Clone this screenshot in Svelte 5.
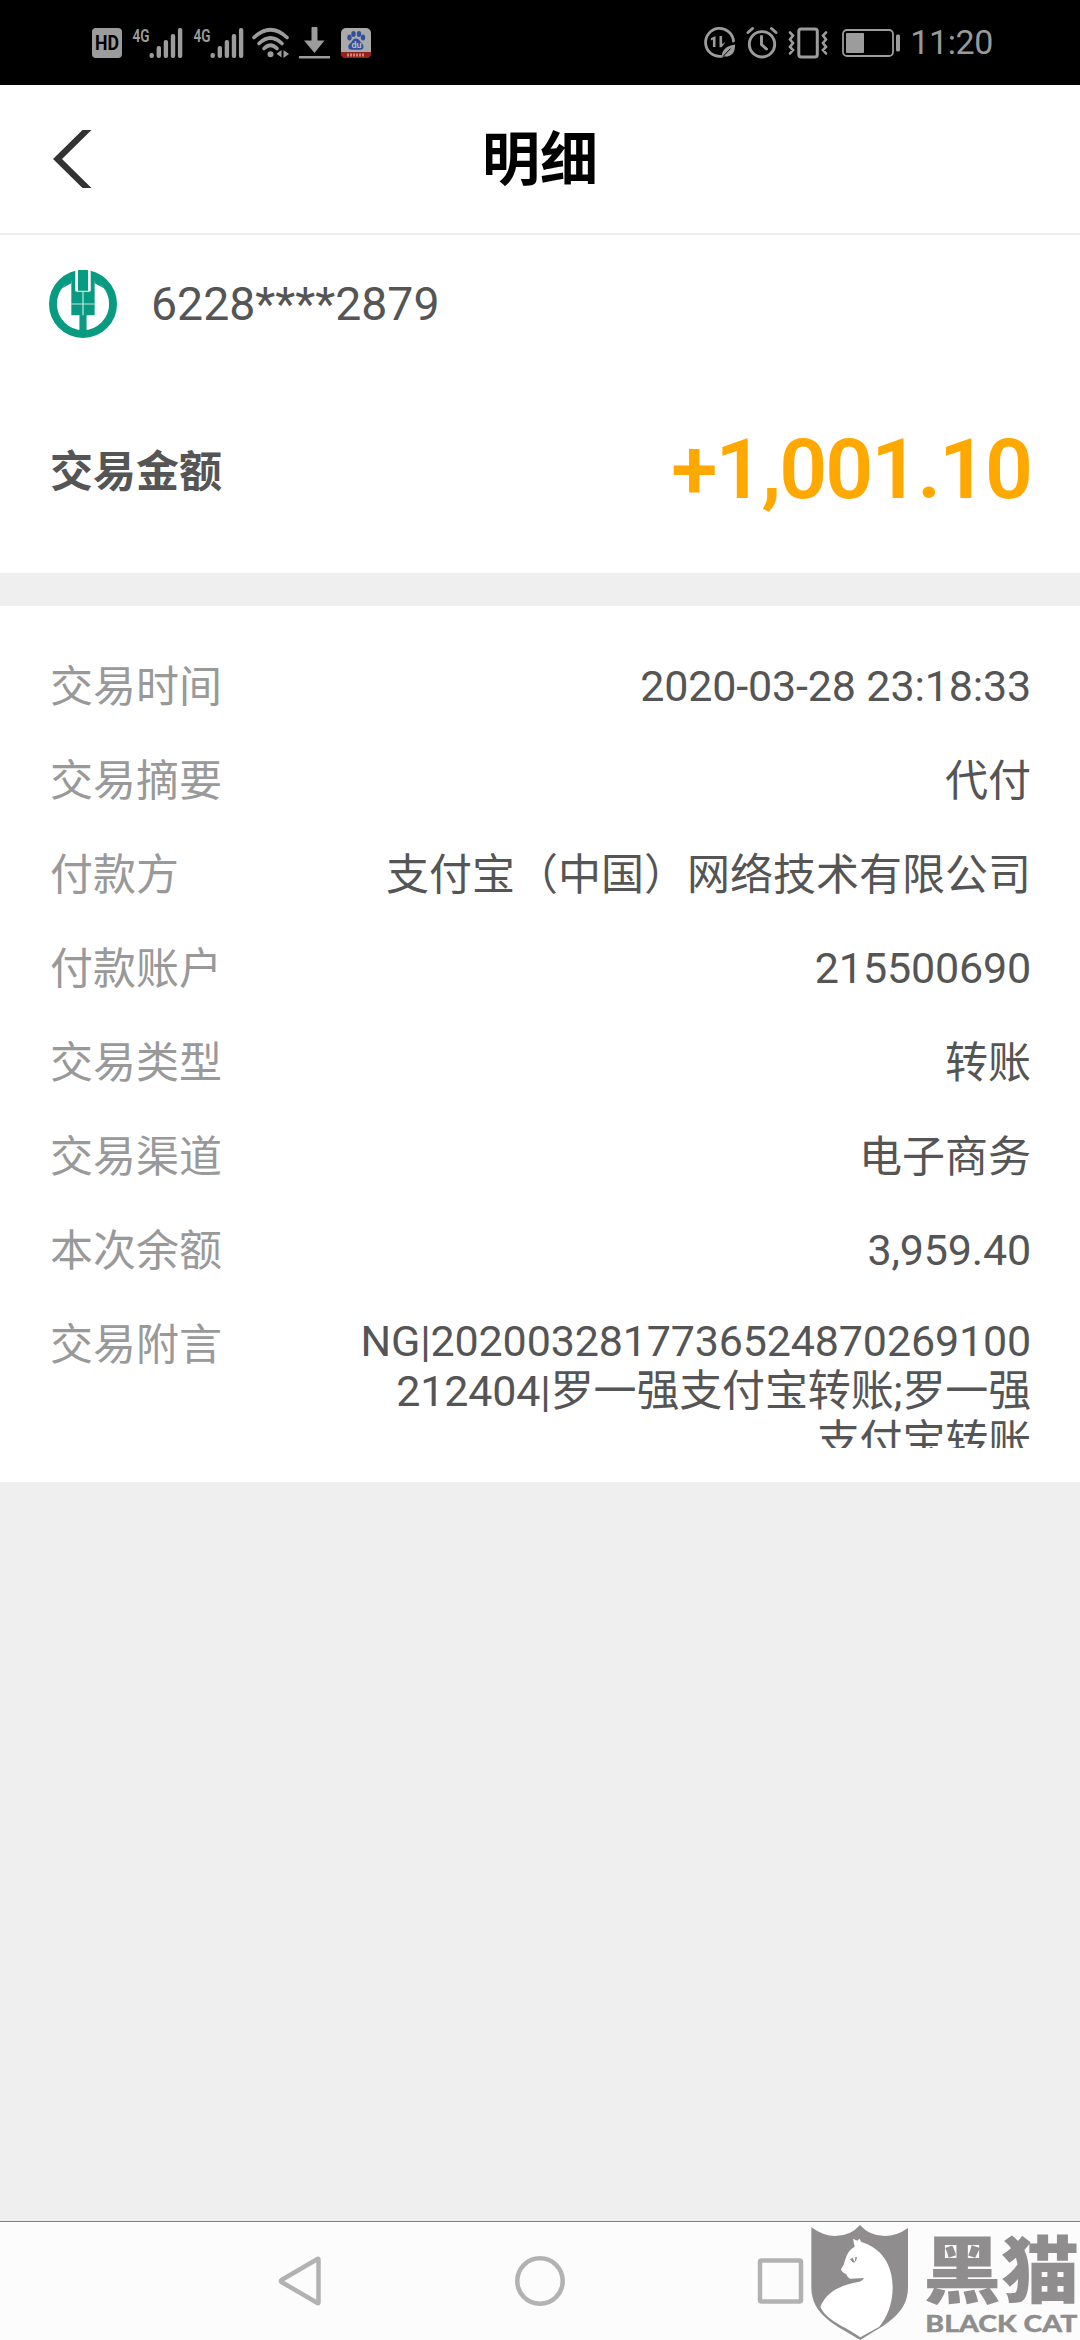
<script>
	const card = '6228****2879';
	const amount = '+1,001.10';

	const rows = [
		{ label: '交易时间', value: '2020-03-28 23:18:33' },
		{ label: '交易摘要', value: '代付' },
		{ label: '付款方', value: '支付宝（中国）网络技术有限公司' },
		{ label: '付款账户', value: '215500690' },
		{ label: '交易类型', value: '转账' },
		{ label: '交易渠道', value: '电子商务' },
		{ label: '本次余额', value: '3,959.40' },
		{
			label: '交易附言',
			value: 'NG|2020032817736524870269100212404|罗一强支付宝转账;罗一强支付宝转账',
			long: true
		}
	];

	// bar heights of the signal icon, left to right
	const bars = [5, 12, 18, 24, 30];

	const isNumber = (s) => /^[\d\s.,:-]+$/.test(s);
</script>

{#snippet signal()}
	<svg class="signal" width="52" height="32" viewBox="0 0 52 32">
		<text x="0.5" y="14.5" font-size="19" font-weight="600" textLength="17" lengthAdjust="spacingAndGlyphs">4G</text>
		{#each bars as h, i}
			<rect x={17.5 + i * 7.1} y={31 - h} width="4.4" height={h} rx="2" />
		{/each}
	</svg>
{/snippet}

<div class="screen">
	<div class="status">
		<div class="side left">
			<svg width="30" height="30" viewBox="0 0 30 30">
				<rect width="30" height="30" rx="4" />
				<text class="dark" x="3" y="22" font-size="20" font-weight="700" textLength="24" lengthAdjust="spacingAndGlyphs">HD</text>
			</svg>
			{@render signal()}
			{@render signal()}
			<svg class="wifi" width="38" height="32" viewBox="0 0 38 32">
				<g class="line" stroke-width="3.6">
					<path d="M2 10.5Q18.5 -5 35 10.5" />
					<path d="M7 16.5Q18.5 5.5 30 16.5" />
					<path d="M12 21.5Q18.5 15 25 21.5" />
				</g>
				<circle cx="18.5" cy="27.3" r="3" />
				<path d="M29.5 23v7.5l-5-3.7zM31.5 23v8l5.5-4z" />
			</svg>
			<svg class="download" width="31" height="32" viewBox="0 0 31 32">
				<path d="M12.5 1q0-1 1-1h4q1 0 1 1v12.5h7L15.5 26 5 13.5h7.5zM0 29h31v2.4H0z" />
			</svg>
			<svg class="baidu" width="30" height="30" viewBox="0 0 30 30">
				<rect width="30" height="30" rx="5" fill="#aaa" />
				<path d="M0 24h30v1q0 5-5 5H5q-5 0-5-5z" fill="#96201c" />
				<g fill="#304f9c">
					<ellipse cx="8.5" cy="9.5" rx="2.2" ry="3" />
					<ellipse cx="12.5" cy="6" rx="2.2" ry="3" />
					<ellipse cx="18" cy="6" rx="2.2" ry="3" />
					<ellipse cx="22" cy="9.5" rx="2.2" ry="3" />
					<path d="M15 10.5c3 0 4 3 6 5s2.5 6-1.5 6.3h-9c-4-.3-4-4.3-1.5-6.3s3-5 6-5z" />
				</g>
				<text x="10.5" y="20" font-size="9" font-weight="700" fill="#bbb">du</text>
				<path d="M6 27h18" stroke="#c08a80" stroke-width="3" stroke-dasharray="2 1" />
			</svg>
		</div>
		<div class="side right">
			<svg width="32" height="32" viewBox="0 0 32 32">
				<path class="line" stroke-width="2.8" d="M29.5 14A14 14 0 1 0 17 29.3" />
				<path d="M11.5 9v11h-2.6v-7.5l-2 1v-2.2zM15.5 9h2.6v8l3.5-2-4 5.3h-2.1z" />
				<path d="M31 17.5q.5 13-11.5 12l-1.5 1.5q-1.5-11 13-13.5z" />
				<path d="M19 29.5l7.5-8" stroke="#000" stroke-width="1" />
			</svg>
			<svg class="alarm" width="32" height="32" viewBox="0 0 32 32">
				<g class="line" stroke-width="2.9">
					<circle cx="16" cy="17.3" r="12.7" />
					<path d="M15.5 9.5v8l5 4.5M2 5.5l4.5-4M30 5.5l-4.5-4" />
				</g>
			</svg>
			<svg class="vibrate" width="40" height="32" viewBox="0 0 40 32">
				<g class="line" stroke-width="3">
					<rect x="10.8" y="2" width="18.5" height="28" rx="2.5" />
					<path d="M2 5.5l3 3-3 4 3 3.5-3 4 3 3-3 3.5M38 5.5l-3 3 3 4-3 3.5 3 4-3 3 3 3.5" stroke-width="2.6" />
				</g>
			</svg>
			<svg class="battery" width="59" height="28" viewBox="0 0 59 28">
				<rect class="line" x="1" y="1" width="50" height="26" rx="4" stroke-width="1.8" />
				<rect x="4" y="4" width="18" height="20" rx="1" />
				<rect x="54" y="5.5" width="4" height="17" rx="1.5" />
			</svg>
			<span class="time">11:20</span>
		</div>
	</div>

	<header>
		<button aria-label="返回">
			<svg width="39" height="58" viewBox="0 0 39 58">
				<path d="M29.5 0h9L9 29l29.5 29h-9L0 29z" fill="#333" />
			</svg>
		</button>
		<h1>明细</h1>
	</header>

	<section class="summary">
		<div class="account">
			<svg width="68" height="68" viewBox="0 0 67 67">
				<circle cx="33.5" cy="33.5" r="29.6" fill="none" stroke="#099b81" stroke-width="7.8" />
				<path d="M22 2h23v42.5h-8V63h-7V44.5h-8zM29 0h9v8h-9z" fill="#099b81" />
				<path d="M22 8v5L13 18zM45 8v5l9 5z" fill="#099b81" />
				<g fill="none" stroke="#fff">
					<path d="M27.2 0v21M39.8 0v21" stroke-width="2.6" />
					<path d="M27 21h13M33.5 21v23.5M22 33.5h23" stroke-width="1.2" stroke-opacity=".75" />
				</g>
			</svg>
			<span>{card}</span>
		</div>
		<div class="total">
			<span class="total-label">交易金额</span>
			<span class="amount">{amount}</span>
		</div>
	</section>

	<section class="details">
		{#each rows as { label, value, long }}
			<div class="row" class:long>
				<span class="label">{label}</span>
				<span class="value" class:number={isNumber(value)}>{value}</span>
			</div>
		{/each}
	</section>

	<nav>
		<svg width="52" height="52" viewBox="0 0 52 52">
			<path d="M44.5 4.5v43q0 1-1 .5L7.5 27q-1.3-1 0-2L43.5 4q1-.5 1 .5z" />
		</svg>
		<svg width="52" height="52" viewBox="0 0 52 52">
			<circle cx="26" cy="26" r="22.7" />
		</svg>
		<svg width="52" height="52" viewBox="0 0 52 52">
			<rect x="6" y="5.5" width="41" height="41" rx="1.5" />
		</svg>
	</nav>

	<svg class="watermark" width="290" height="140" viewBox="0 0 870 420">
		<path
			d="M64 82Q100 108 135 108Q182 108 210 75Q238 108 285 108Q320 108 354 84V262C354 345 282 375 211 420C135 375 64 345 64 262z"
			fill="#8f8d8e"
		/>
		<path
			d="M189 116L202 122L208 116L214 126C275 144 308 195 308 262C308 310 292 352 268 380L211 412C165 378 108 362 91 320C112 270 160 255 200 247Q218 244 222 234L180 236Q172 232 168 222Q154 216 153 207Q163 195 166 178C171 160 180 148 194 140z"
			fill="#fff"
		/>
		<path d="M180 178q5 9 13 10q8-6 8-17q-10-1-21 7z" fill="#8f8d8e" />
		<path d="M188 172q2 8 6 14l2-14z" fill="#fff" />
		<text class="cjk" x="400" y="290" font-size="218" textLength="468" lengthAdjust="spacingAndGlyphs">黑猫</text>
		<text class="latin" x="406" y="397" font-size="69" textLength="456" lengthAdjust="spacingAndGlyphs">BLACK CAT</text>
	</svg>
</div>

<style>
	:global(body) {
		margin: 0;
	}

	* {
		box-sizing: border-box;
	}

	svg {
		display: block;
		flex: none;
		overflow: visible;
	}

	.screen {
		position: relative;
		display: flex;
		flex-direction: column;
		width: 1080px;
		height: 2340px;
		overflow: hidden;
		background: #efefef;
		color: #555;
		font-family: Roboto, 'Noto Sans CJK SC', sans-serif;
	}

	.status {
		display: flex;
		justify-content: space-between;
		height: 85px;
		padding: 0 87px 0 92px;
		background: #000;
		color: #999;
	}
	.status svg {
		fill: #9c9c9c;
	}
	.status .line {
		fill: none;
		stroke: #9c9c9c;
		stroke-linecap: round;
	}
	.side {
		display: flex;
		align-items: center;
	}
	.status .dark {
		fill: #000;
	}
	.signal {
		margin-left: 10px;
	}
	.signal + .signal {
		margin-left: 9px;
	}
	.wifi {
		margin-left: 7px;
	}
	.download {
		margin-left: 9px;
	}
	.baidu {
		margin-left: 11px;
	}
	.alarm {
		margin-left: 10px;
	}
	.vibrate {
		margin-left: 10px;
	}
	.battery {
		margin-left: 14px;
	}
	.time {
		margin-left: 9px;
		font-size: 34px;
		line-height: 85px;
		letter-spacing: -0.4px;
	}

	header {
		display: grid;
		grid-template-columns: 1fr auto 1fr;
		align-items: center;
		height: 150px;
		padding: 0 53px;
		background: #fff;
		border-bottom: 2px solid #ececec;
	}
	header button {
		justify-self: start;
		padding: 0;
		border: none;
		background: none;
	}
	h1 {
		margin: 2px 0 0;
		color: #000;
		font-size: 58px;
		font-weight: 700;
		line-height: 1;
	}

	.summary {
		height: 338px;
		padding: 34px 49px 0;
		background: #fff;
	}
	.account {
		display: flex;
		align-items: center;
		gap: 34px;
		font-size: 46.4px;
		line-height: 70px;
	}
	.total {
		display: flex;
		align-items: center;
		justify-content: space-between;
		height: 100px;
		margin-top: 81px;
	}
	.total-label {
		margin: 3px 0 0 1px;
		font-size: 43px;
		font-weight: 700;
		line-height: 60px;
	}
	.amount {
		color: #ffa800;
		font-size: 84px;
		font-weight: 600;
		line-height: 102px;
		letter-spacing: -2px;
	}

	.details {
		height: 876px;
		margin-top: 33px;
		padding: 34px 49px 0 50px;
		background: #fff;
		font-size: 43px;
	}
	.row {
		display: flex;
		align-items: flex-start;
		justify-content: space-between;
		height: 94px;
		line-height: 94px;
	}
	.label {
		color: #999;
	}
	.value {
		text-align: right;
	}
	.number {
		letter-spacing: -0.15px;
		line-height: 92px;
	}
	.long {
		height: 150px;
	}
	.long .value {
		width: 674px;
		height: 132px;
		margin-top: 18px;
		overflow: hidden;
		line-height: 50px;
		letter-spacing: -0.15px;
		word-break: break-all;
	}

	nav {
		display: grid;
		grid-template-columns: repeat(3, 240px);
		justify-content: center;
		place-items: center;
		height: 119px;
		margin-top: auto;
		background: #fcfcfc;
		border-top: 1px solid #808080;
	}
	nav svg {
		fill: none;
		stroke: #b2b2b2;
		stroke-width: 4.5;
		stroke-linejoin: round;
	}

	.watermark {
		position: absolute;
		right: 0;
		bottom: 0;
		fill: #8f8d8e;
	}
	.cjk {
		font-family: 'Noto Sans CJK SC', sans-serif;
		font-weight: 900;
	}
	.latin {
		font-family: Lato, sans-serif;
		font-weight: 900;
		stroke: #8f8d8e;
		stroke-width: 1;
	}
</style>
